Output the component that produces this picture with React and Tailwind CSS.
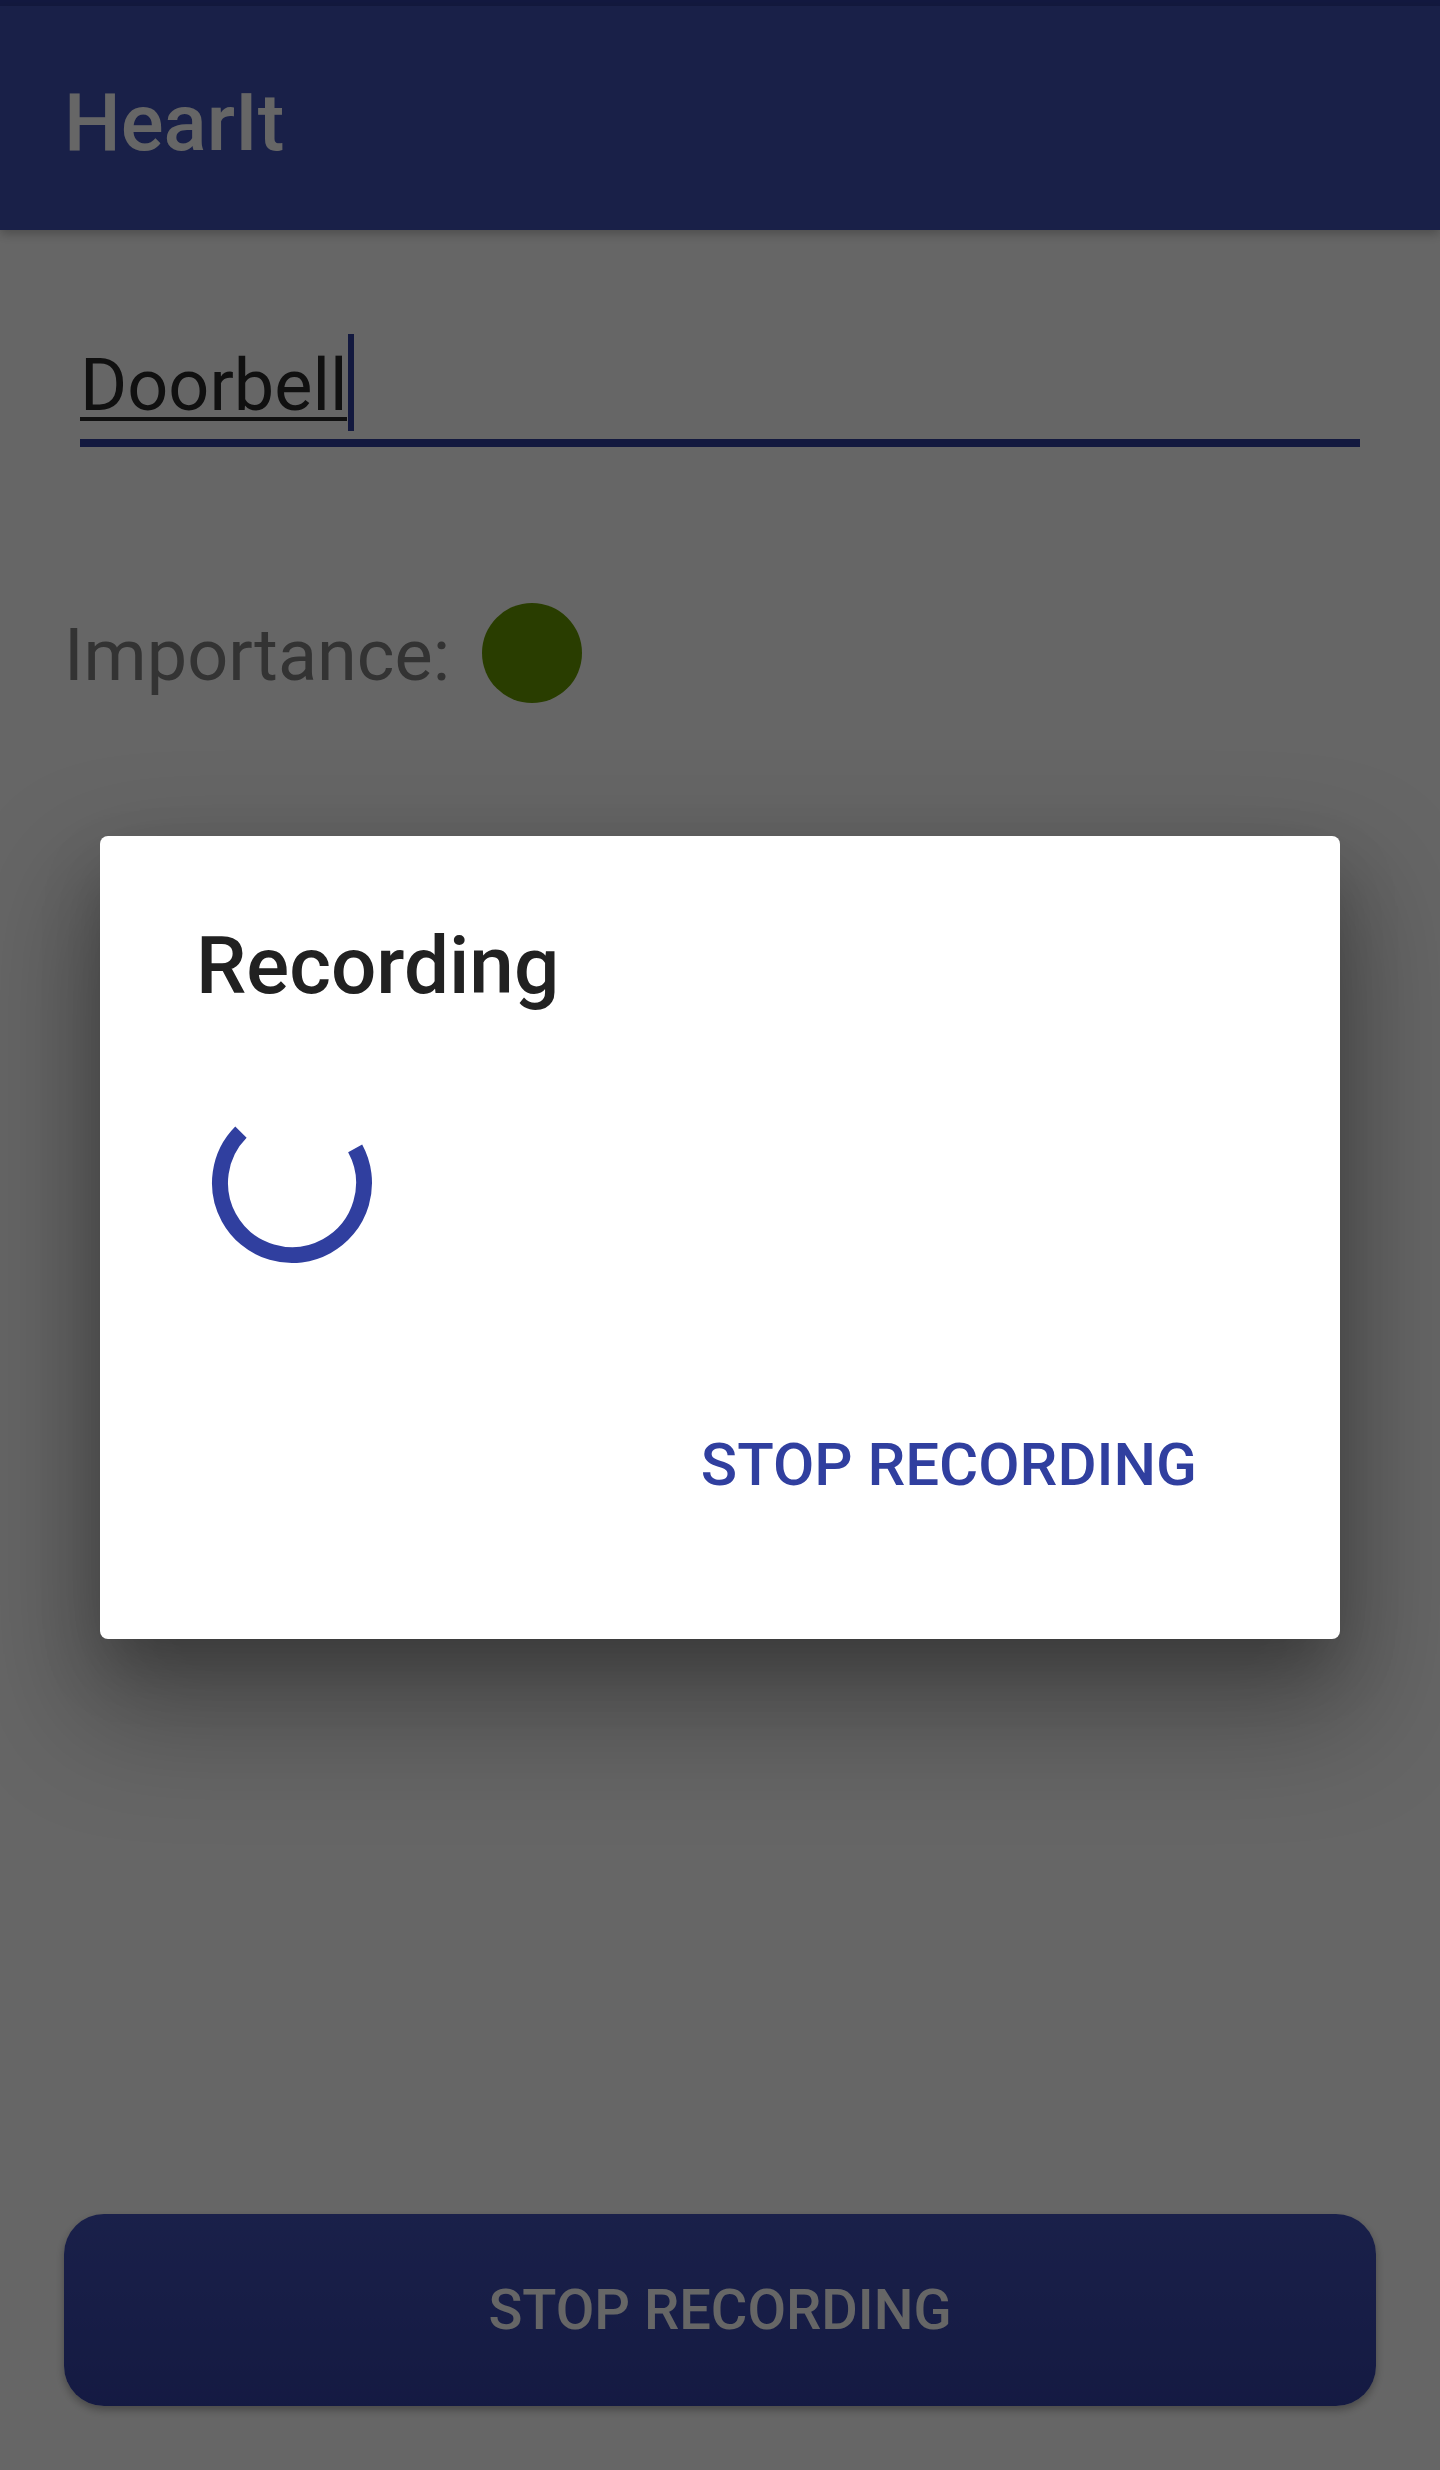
import React from 'react';

// Recording dialog shown over the "HearIt" sound editor
const Spinner = () => (
    <svg width="192" height="192" viewBox="0 0 192 192">
        <circle
            cx="96" cy="96" r="72"
            fill="none"
            stroke="#303F9F"
            strokeWidth="16"
            strokeDasharray="318 452.4"
            transform="rotate(-28.7 96 96)"
        />
    </svg>
);

const App = () => {
    return (
        <div className="relative w-[1440px] h-[2470px] overflow-hidden bg-white font-['Roboto',sans-serif]">
            <div className="flex flex-col h-full">
                {/* status bar + toolbar */}
                <div className="h-[6px] bg-[#303F9F]" />
                <div className="relative h-[224px] flex items-center pt-[10px] pl-[64px] bg-[#3F51B5] shadow-[0_4px_10px_rgba(0,0,0,0.25)]">
                    <span className="text-[80px] leading-[80px] font-medium text-white">HearIt</span>
                </div>

                {/* name field */}
                <div className="mt-[104px] mx-[80px] h-[113px] border-b-[8px] border-[#303F9F]">
                    <div className="flex items-start">
                        <span className="mt-[21px] text-[72px] leading-[62px] text-[#2a2a2a] border-b-4 border-[#2a2a2a]">Doorbell</span>
                        <span className="ml-[1px] w-[6px] h-[97px] bg-[#303F9F]" />
                    </div>
                </div>

                {/* importance */}
                <div className="mt-[156px] ml-[64px] flex items-start">
                    <span className="mt-[17px] text-[72px] leading-[72px] text-[#808080]">Importance:</span>
                    <span className="ml-[32px] w-[100px] h-[100px] rounded-full bg-[#669900]" />
                </div>

                <div className="flex-1" />

                <button className="mx-[64px] mb-[64px] h-[192px] rounded-[40px] bg-gradient-to-b from-[#4151B8] to-[#3442A6] shadow-[0_4px_8px_rgba(0,0,0,0.3)] flex items-center justify-center">
                    <span className="text-[56px] leading-[56px] font-medium text-white">STOP RECORDING</span>
                </button>
            </div>

            {/* scrim + dialog */}
            <div className="absolute inset-0 z-20 bg-black/60 flex items-center justify-center pt-[5px]">
                <div className="w-[1240px] h-[803px] bg-white rounded-[8px] shadow-[0_60px_120px_20px_rgba(0,0,0,0.28),0_30px_60px_-10px_rgba(0,0,0,0.25)] flex flex-col">
                    <div className="pt-[90px] pl-[96px] text-[80px] leading-[80px] font-medium text-[#212121]">Recording</div>
                    <div className="mt-[81px] pl-[96px]">
                        <Spinner />
                    </div>
                    <div className="mt-[156px] flex justify-end pr-[143px]">
                        <span className="text-[60px] leading-[60px] font-medium text-[#303F9F]">STOP RECORDING</span>
                    </div>
                </div>
            </div>
        </div>
    );
};

export default App;
